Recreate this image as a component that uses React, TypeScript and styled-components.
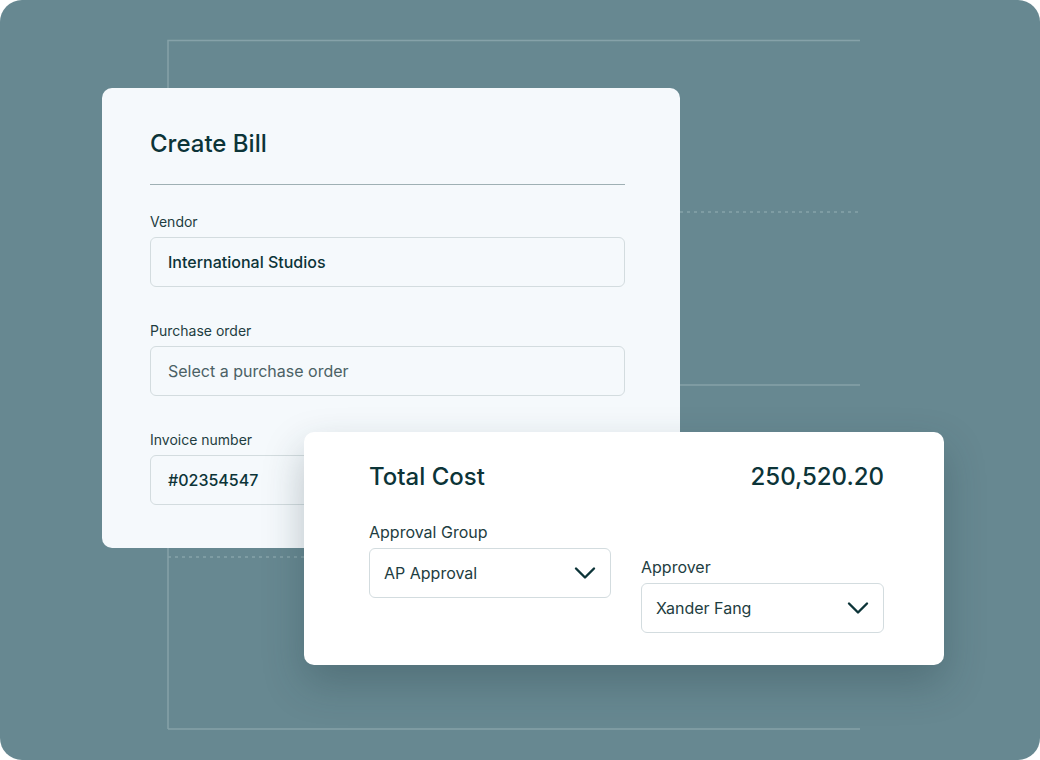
import React from "react";
import styled, { createGlobalStyle } from "styled-components";

const GlobalStyle = createGlobalStyle`
  html, body { margin: 0; padding: 0; background: #ffffff; }
  body { font-family: Inter, "Noto Sans", sans-serif; }
`;

const Canvas = styled.div`
  position: relative;
  width: 1040px;
  height: 760px;
  background: #678891;
  border-radius: 22px;
  overflow: hidden;
  color: #0c3438;
`;

const Backdrop = styled.svg`
  position: absolute;
  inset: 0;
`;

const Card = styled.div<{ $white?: boolean }>`
  position: absolute;
  box-sizing: border-box;
  border-radius: 10px;
  background: ${(p) => (p.$white ? "#ffffff" : "#f5f9fc")};
  box-shadow: ${(p) => (p.$white ? "0 18px 40px rgba(30, 55, 62, 0.28)" : "none")};
`;

const BillCard = styled(Card)`
  left: 102px;
  top: 88px;
  width: 578px;
  height: 460px;
  padding: 40px 55px 0 48px;
`;

const CostCard = styled(Card)`
  left: 304px;
  top: 432px;
  width: 640px;
  height: 233px;
  padding: 30px 60px 0 65px;
`;

const Title = styled.h1`
  margin: 0 0 0 0;
  font-size: 24px;
  font-weight: 500;
  line-height: 32px;
  padding-bottom: 24px;
  border-bottom: 1px solid #9fb0b4;
  margin-left: 0;
  margin-right: 0;
`;

const Field = styled.div`
  display: flex;
  flex-direction: column;
  gap: 7px;
  margin-top: 28px;
  & + & { margin-top: 35px; }
`;

const Label = styled.label`
  font-size: 14px;
  line-height: 17px;
  color: #1e3d41;
`;

const Input = styled.div<{ $placeholder?: boolean }>`
  box-sizing: border-box;
  height: 50px;
  display: flex;
  align-items: center;
  justify-content: space-between;
  padding: 0 17px;
  border: 1px solid #d3dcdf;
  border-radius: 6px;
  font-size: 16px;
  color: ${(p) => (p.$placeholder ? "#4b6165" : "#0c3438")};
  font-weight: ${(p) => (p.$placeholder ? 400 : 500)};
  background: inherit;
`;

const CostHeader = styled.div`
  display: flex;
  justify-content: space-between;
  align-items: center;
  font-size: 24px;
  font-weight: 500;
  line-height: 30px;
`;

const SelectRow = styled.div`
  display: grid;
  grid-template-columns: 242px 243px;
  gap: 30px;
  margin-top: 32px;
  & > div { margin-top: 0; }
`;

const Select = styled(Input)`
  padding: 0 14px 0 14px;
  font-weight: 400;
  color: #1e3d41;
`;

const Chevron = () => (
  <svg width="22" height="14" viewBox="0 0 22 14" fill="none">
    <path d="M2 2.5l9 9 9-9" stroke="#0c3438" strokeWidth="2.4" strokeLinecap="round" strokeLinejoin="round" />
  </svg>
);

export default function App() {
  return (
    <>
      <GlobalStyle />
      <Canvas>
        <Backdrop width="1040" height="760">
          <g stroke="#86a2a9" strokeWidth="1.5" fill="none">
            <path d="M168 729V40.5H860" />
            <path d="M168 729H860" />
            <path d="M680 385H860" />
            <path d="M680 212H860" strokeDasharray="3 4" />
            <path d="M168 557H304" strokeDasharray="3 4" />
          </g>
        </Backdrop>

        <BillCard>
          <Title>Create Bill</Title>
          <Field>
            <Label>Vendor</Label>
            <Input>International Studios</Input>
          </Field>
          <Field>
            <Label>Purchase order</Label>
            <Input $placeholder>Select a purchase order</Input>
          </Field>
          <Field>
            <Label>Invoice number</Label>
            <Input>#02354547</Input>
          </Field>
        </BillCard>

        <CostCard $white>
          <CostHeader>
            <span>Total Cost</span>
            <span>250,520.20</span>
          </CostHeader>
          <SelectRow>
            <Field>
              <Label style={{ fontSize: 16 }}>Approval Group</Label>
              <Select>
                AP Approval
                <Chevron />
              </Select>
            </Field>
            <Field>
              <Label style={{ fontSize: 16 }}>Approver</Label>
              <Select>
                Xander Fang
                <Chevron />
              </Select>
            </Field>
          </SelectRow>
        </CostCard>
      </Canvas>
    </>
  );
}
